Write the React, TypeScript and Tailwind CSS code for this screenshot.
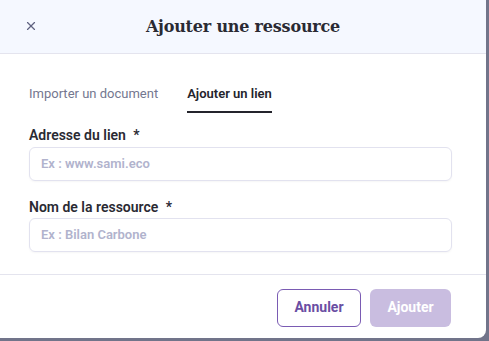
import { X } from 'lucide-react';

const body = "font-['Roboto',_'Noto_Sans',_sans-serif]";

export default function App() {
  return (
    <div className={`w-[489px] h-[341px] bg-[#71748a] overflow-hidden ${body}`}>
      <div className="w-[486px] h-[338px] bg-white rounded-br-lg flex flex-col">
        {/* Header */}
        <div className="h-[54px] shrink-0 bg-[#f5f8ff] border-b border-[#e4e4ee] flex items-center relative">
          <button className="absolute left-[22px] top-[17px] p-[2px] text-[#5f6280]">
            <X className="w-[14px] h-[14px]" strokeWidth={2} />
          </button>
          <h2 className="w-full text-center text-[16px] font-bold text-[#2a2a33] font-['DejaVu_Serif',_serif] tracking-[-0.2px]">
            Ajouter une ressource
          </h2>
        </div>

        {/* Tabs */}
        <div className="px-[29px] pt-[30px] flex gap-[29px]">
          <span className="text-[13px] text-[#74778f] pb-[7px]">Importer un document</span>
          <span className="text-[13px] font-semibold text-[#24242c] pb-[7px] border-b-2 border-[#24242c]">Ajouter un lien</span>
        </div>

        {/* Fields */}
        <div className="px-[29px] pt-[12px] flex flex-col">
          <label className="text-[14px] font-semibold text-[#2a2a33] leading-[20px]">
            Adresse du lien <span className="ml-[4px]">*</span>
          </label>
          <div className="mt-[2px] mr-[5px] h-[34px] border border-[#e2e2ef] rounded-md flex items-center px-[11px] shadow-[0_1px_2px_rgba(0,0,0,0.04)]">
            <span className="text-[13px] font-semibold text-[#b1b3cd]">Ex : www.sami.eco</span>
          </div>
          <label className="mt-[16px] text-[14px] font-semibold text-[#2a2a33] leading-[20px]">
            Nom de la ressource <span className="ml-[4px]">*</span>
          </label>
          <div className="mt-[1px] mr-[5px] h-[34px] border border-[#e2e2ef] rounded-md flex items-center px-[11px] shadow-[0_1px_2px_rgba(0,0,0,0.04)]">
            <span className="text-[13px] font-semibold text-[#b1b3cd]">Ex : Bilan Carbone</span>
          </div>
        </div>

        {/* Footer */}
        <div className="mt-auto border-t border-[#e4e4ee] h-[64px] flex items-center justify-end gap-[9px] pr-[35px] pt-[2px]">
          <button className="h-[38px] w-[84px] rounded-md border border-[#7a5bb3] text-[#6a4ea3] text-[14px] font-bold">
            Annuler
          </button>
          <button className="h-[38px] w-[81px] rounded-md bg-[#c9bde0] text-white text-[14px] font-bold">
            Ajouter
          </button>
        </div>
      </div>
    </div>
  );
}
